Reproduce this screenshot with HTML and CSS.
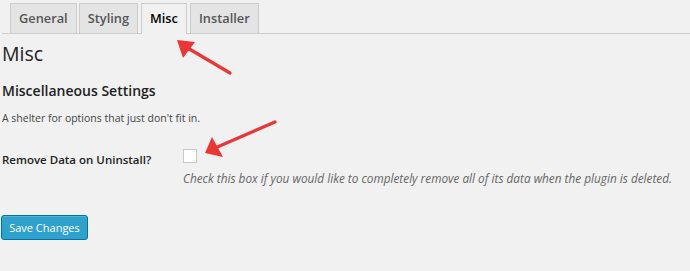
FILE: index.html
```html
<!DOCTYPE html>
<html>
<head>
<meta charset="utf-8">
<link rel="stylesheet" href="styles.css">
</head>
<body>
<div class="page">
  <nav class="tabs">
    <a class="tab">General</a>
    <a class="tab">Styling</a>
    <a class="tab active">Misc</a>
    <a class="tab">Installer</a>
  </nav>
  <h2 class="title">Misc</h2>
  <h3 class="section">Miscellaneous Settings</h3>
  <p class="intro">A shelter for options that just don't fit in.</p>
  <div class="row">
    <div class="label">Remove Data on Uninstall?</div>
    <div class="field">
      <span class="checkbox"></span>
      <p class="desc">Check this box if you would like to completely remove all of its data when the plugin is deleted.</p>
    </div>
  </div>
  <button class="save">Save Changes</button>
</div>
<svg class="arrows" width="690" height="271" viewBox="0 0 690 271">
  <line x1="230" y1="73" x2="186" y2="47" stroke="#ec3535" stroke-width="3.2" stroke-linecap="round"/>
  <polygon points="177,40 195,42 183,58" fill="#ec3535"/>
  <line x1="275" y1="122" x2="215" y2="148" stroke="#ec3535" stroke-width="3.2" stroke-linecap="round"/>
  <polygon points="205,153 212,137 223,157" fill="#ec3535"/>
</svg>
</body>
</html>
```
FILE: styles.css
```css
html, body {
  margin: 0;
  padding: 0;
  background: #f1f1f1;
  width: 690px;
  height: 271px;
  overflow: hidden;
  font-family: "Open Sans", sans-serif;
  color: #444;
}
.page {
  padding-left: 2px;
}
.tabs {
  display: flex;
  padding: 3px 0 0 8px;
  border-bottom: 1px solid #ccc;
  gap: 2px;
}
.tab {
  display: block;
  height: 29px;
  line-height: 29px;
  padding: 0 8px;
  background: #e4e4e4;
  border: 1px solid #ccc;
  border-bottom: none;
  font-size: 12.8px;
  font-weight: 600;
  color: #555;
}
.tab.active {
  background: #f1f1f1;
  color: #000;
  height: 30px;
  margin: 0 1px -1px 1px;
}
.title {
  margin: 7px 0 0 0;
  font-size: 19.5px;
  font-weight: 400;
  color: #222;
  line-height: 26px;
}
.section {
  margin: 14px 0 0 0;
  font-size: 14px;
  font-weight: 600;
  color: #222;
  line-height: 20px;
}
.intro {
  margin: 9px 0 0 0;
  font-size: 10.5px;
  line-height: 16px;
  color: #444;
}
.row {
  display: flex;
  margin-top: 22px;
}
.label {
  width: 181px;
  font-size: 11.5px;
  font-weight: 600;
  color: #222;
  padding-top: 4px;
  line-height: 16px;
}
.checkbox {
  display: block;
  width: 12px;
  height: 12px;
  background: #fff;
  border: 1px solid #c8c8c8;
  margin-top: 1px;
}
.desc {
  margin: 7px 0 0 0;
  font-size: 11.8px;
  font-style: italic;
  color: #666;
  line-height: 16px;
}
.save {
  display: block;
  margin-top: 29px;
  margin-left: -1px;
  width: 87px;
  height: 25px;
  background: #2ea2cc;
  border: 1px solid #0074a2;
  border-radius: 3px;
  box-shadow: inset 0 1px 0 rgba(120,200,230,.5);
  color: #fff;
  font-family: "Open Sans", sans-serif;
  font-size: 11px;
  padding: 0;
}
.arrows {
  position: absolute;
  left: 0;
  top: 0;
}
```
